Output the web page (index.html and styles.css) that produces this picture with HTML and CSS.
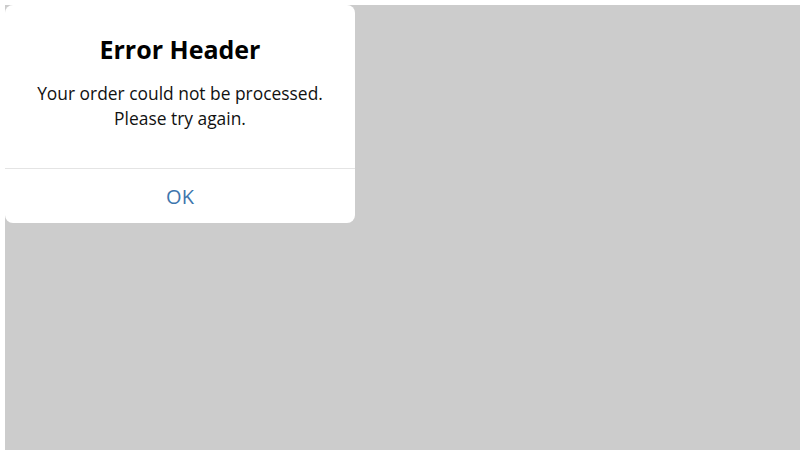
FILE: index.html
```html
<!DOCTYPE html>
<html>
<head>
<meta charset="utf-8">
<link rel="stylesheet" href="styles.css">
</head>
<body>
<div class="backdrop">
  <div class="dialog">
    <div class="content">
      <h1 class="title">Error Header</h1>
      <p class="message">Your order could not be processed.<br>Please try again.</p>
    </div>
    <div class="actions">
      <button class="ok">OK</button>
    </div>
  </div>
</div>
</body>
</html>
```
FILE: styles.css
```css
html, body {
  margin: 0;
  padding: 0;
  background: #ffffff;
  font-family: "Open Sans", "Noto Sans", sans-serif;
}
.backdrop {
  margin: 5px 0 0 5px;
  width: 795px;
  height: 445px;
  background: #cccccc;
}
.dialog {
  width: 350px;
  height: 218px;
  background: #ffffff;
  border-radius: 8px;
  display: flex;
  flex-direction: column;
  box-sizing: border-box;
}
.content {
  padding: 28px 10px 0;
  height: 163px;
  box-sizing: border-box;
  text-align: center;
}
.title {
  margin: 0;
  font-size: 25px;
  line-height: 32px;
  font-weight: 700;
  color: #000;
}
.message {
  margin: 16px 0 0;
  font-size: 17.4px;
  line-height: 25px;
  color: #111;
}
.actions {
  border-top: 1px solid #e4e4e4;
  flex: 1;
  display: flex;
}
.ok {
  flex: 1;
  border: 0;
  background: transparent;
  font-family: "Open Sans", "Noto Sans", sans-serif;
  font-size: 20px;
  color: #3e76ad;
  padding: 0;
}
```
